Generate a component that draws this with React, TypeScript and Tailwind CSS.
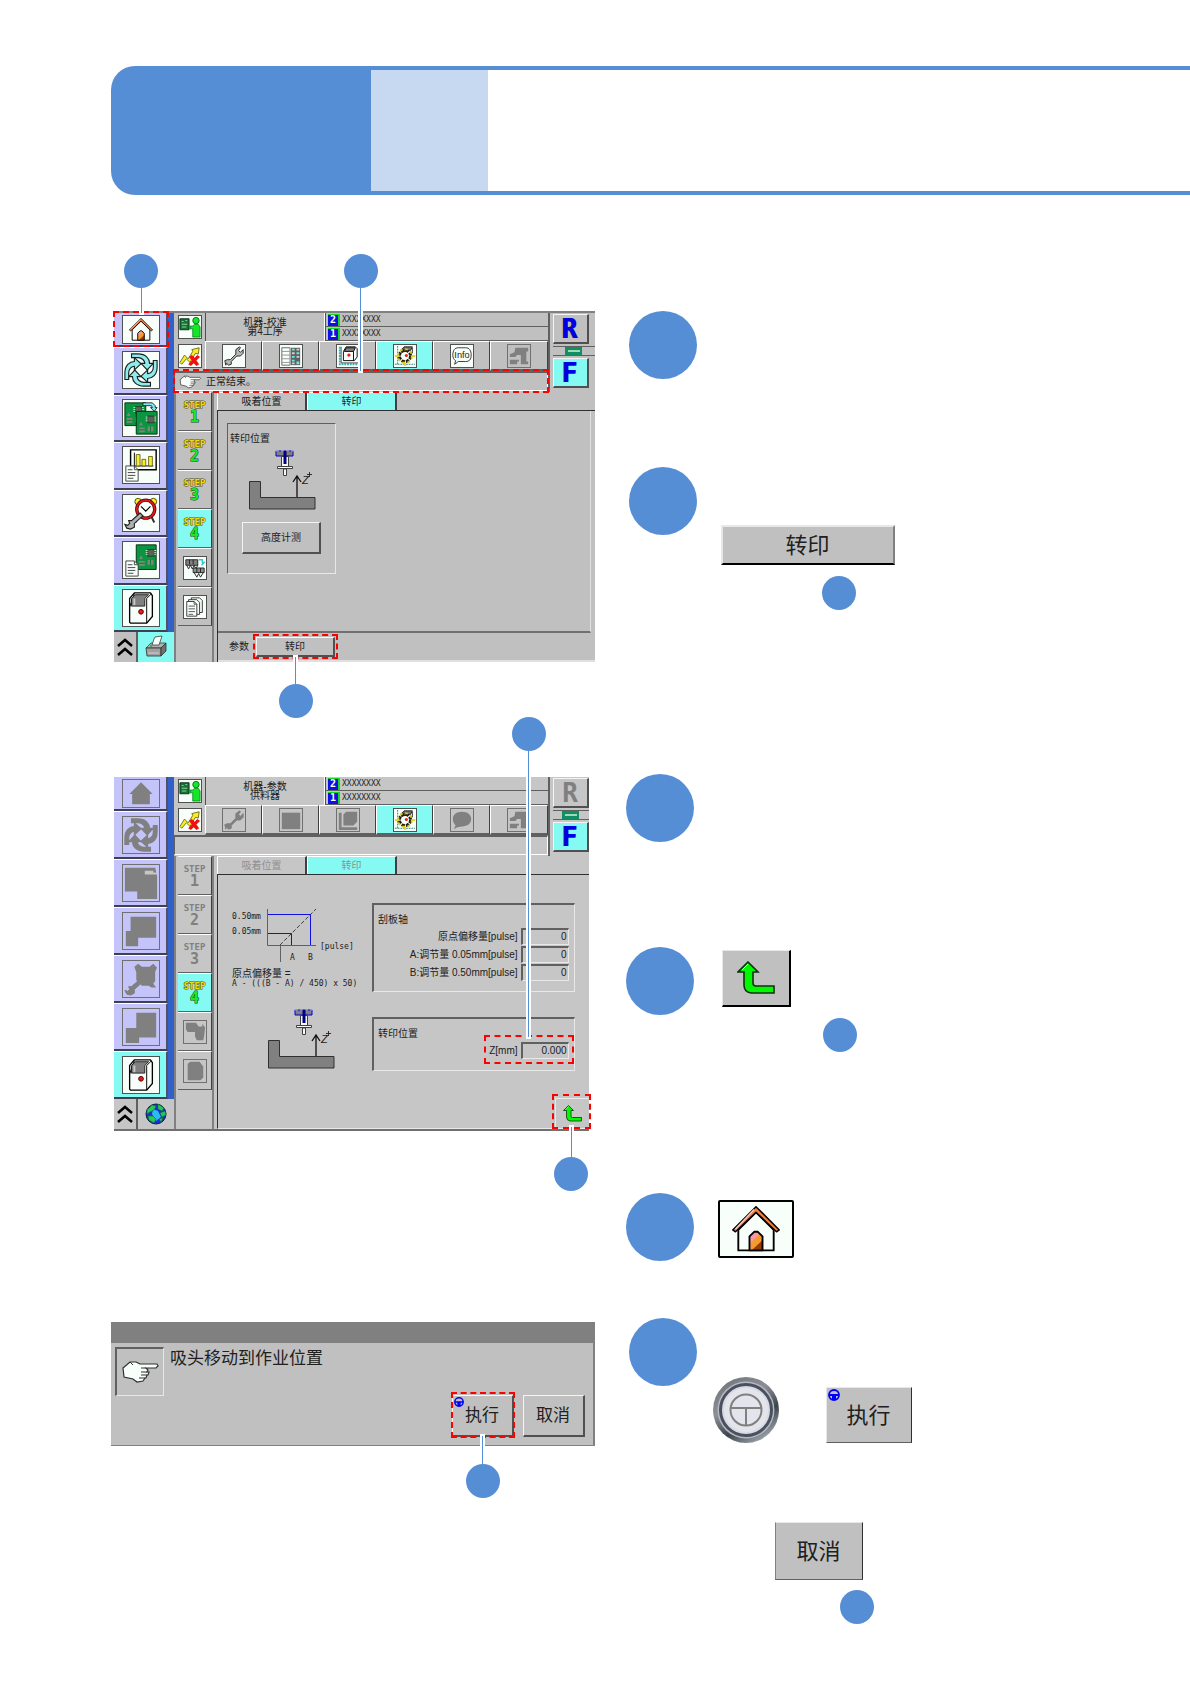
import React from 'react';
import clsx from 'clsx';

interface IconProps {
  off?: boolean;
}

interface CalloutProps {
  className: string;
  line: string;
  below?: boolean;
}

const Dot: React.FC<{ className?: string }> = ({ className }) => (
  <span className={clsx('block size-[34px] shrink-0 rounded-full bg-[#558ed5]', className)} />
);

// dashed frame around its parent, with a leader line to a dot
const Callout: React.FC<CalloutProps> = ({ className, line, below }) => (
  <span className={clsx('pointer-events-none absolute z-20 border-2 border-dashed border-[#ff0000]', className)}>
    <span
      className={clsx(
        'absolute left-1/2 flex -translate-x-1/2 items-center',
        below ? 'top-full flex-col-reverse' : 'bottom-full flex-col'
      )}
    >
      <Dot className="z-10" />
      <span className={clsx('block w-px bg-[#558ed5] ring-2 ring-white', line)} />
    </span>
  </span>
);

/* ---------- icons ---------- */

const HomeIcon: React.FC<IconProps> = ({ off }) => (
  <svg viewBox="0 0 76 58" className="size-full">
    {off ? (
      <path d="M38 5 63 30H57V52H19V30H13Z" fill="#808080" />
    ) : (
      <g strokeLinejoin="round">
        <path d="M19 30V52H57V30L38 11Z" fill="#f8fffa" stroke="#000" strokeWidth="2" />
        <path d="M38 5 63 30 60 32 38 11 16 32 13 30Z" fill="#f0803c" stroke="#000" strokeWidth="1.6" />
        <path d="M36 8 16 29" stroke="#ffc8c8" strokeWidth="1.5" />
        <path d="M31 52V37L36 32H40L45 37V52Z" fill="#f59a30" />
        <path d="M31 45V37L36 32H40L42 34Z" fill="#fa9a9a" />
        <path d="M33 52 45 41V52Z" fill="#963c00" />
        <path d="M31 52V37L36 32H40L45 37V52Z" fill="none" stroke="#000" strokeWidth="2" />
      </g>
    )}
  </svg>
);

const CycleIcon: React.FC<IconProps> = ({ off }) => (
  <svg viewBox="0 0 38 38" className="size-full">
    {[0, 90, 180, 270].map((a) => (
      <path
        key={a}
        transform={`rotate(${a} 19 19)`}
        d="M9 2H16C24 2 28 7 28 12H32L25.500 19 19 12H23C23 9 20 6 16 6H9Z"
        fill={off ? '#808080' : '#90ecec'}
        stroke={off ? '#808080' : '#182020'}
        strokeWidth="1.200"
      />
    ))}
  </svg>
);

const Chip: React.FC = () => (
  <g>
    <path d="M12 4H19V11H12Z" fill="#586458" stroke="#203020" strokeWidth=".8" />
    <path d="M10 5H12M10 7H12M10 9H12M19 5H21M19 7H21M19 9H21" stroke="#c8e8c8" />
    <path d="M3 14 5 10 7 14ZM3 16H9V21H3ZM12 15H18V20H12Z" fill="#7a8a7a" />
    <path d="M3 18.500H9M15 15V20" stroke="#107a30" />
  </g>
);

const BoardsIcon: React.FC<IconProps> = ({ off }) =>
  off ? (
    <svg viewBox="0 0 38 38" className="size-full">
      <path d="M2 3H34L36 12V36H15V28H2Z" fill="#808080" />
      <path d="M23 6H32V8H36V10H23Z" fill="#c6c6c6" />
    </svg>
  ) : (
    <svg viewBox="0 0 38 38" className="size-full">
      <path d="M2 3H24V27H2Z" fill="#0a9640" stroke="#003010" />
      <g transform="translate(1 3)"><Chip /></g>
      <path d="M14 12H36V36H14Z" fill="#0a9640" stroke="#003010" />
      <g transform="translate(14 13)"><Chip /></g>
      <path d="M21 3H31L34 6V8H36L33 12 29 8H31L30 6H21Z" fill="#80e8f0" stroke="#000" strokeWidth=".8" />
    </svg>
  );

const Sheet: React.FC = () => (
  <g>
    <path d="M3 20H12L16 24V36H3Z" fill="#f8fffa" stroke="#404040" />
    <path d="M12 20V24H16M5 24H10M5 27H13M5 30H13M5 33H11" fill="none" stroke="#404040" />
  </g>
);

const ReportIcon: React.FC<IconProps> = ({ off }) =>
  off ? (
    <svg viewBox="0 0 38 38" className="size-full">
      <path d="M8 4H35V26H16V35H3V19H8Z" fill="#808080" />
    </svg>
  ) : (
    <svg viewBox="0 0 38 38" className="size-full">
      <path d="M8 3H35V24H8Z" fill="#f8fffa" stroke="#000" strokeWidth="1.500" />
      <path d="M12 6V20H32" fill="none" stroke="#000" />
      <path d="M14 8H18V20H14ZM20 13H24V20H20ZM27 10H31V20H27Z" fill="#f8ee30" stroke="#504800" strokeWidth=".8" />
      <Sheet />
    </svg>
  );

const ClockIcon: React.FC<IconProps> = ({ off }) => {
  const wrench = 'M4 35 2 31 5 32 7 30 6 27 9 27 18 19 21 22 12 30 12 34 8 36Z';
  return off ? (
    <svg viewBox="0 0 38 38" className="size-full">
      <path d="M12 6 16 3 20 6H28L32 3 36 7 34 11V21L32 24 35 28H30L27 26H20L14 20V12Z" fill="#808080" />
      <path d={wrench} fill="#808080" stroke="#808080" />
    </svg>
  ) : (
    <svg viewBox="0 0 38 38" className="size-full">
      <path d="M16 24 13 29M30 23 33 29" stroke="#303030" strokeWidth="2" />
      <circle cx="16" cy="7" r="3.500" fill="#f8ee30" stroke="#504800" />
      <circle cx="32" cy="7" r="3.500" fill="#f8ee30" stroke="#504800" />
      <circle cx="24" cy="15" r="9.500" fill="#f8fffa" stroke="#500000" strokeWidth="3.500" />
      <circle cx="24" cy="15" r="9.500" fill="none" stroke="#e01818" strokeWidth="2" />
      <path d="M19 12 24 17 29 12" fill="none" stroke="#000" strokeWidth="1.200" />
      <path d={wrench} fill="#b0b0b0" stroke="#202020" strokeWidth="1.200" />
    </svg>
  );
};

const BoardDocIcon: React.FC<IconProps> = ({ off }) =>
  off ? (
    <svg viewBox="0 0 38 38" className="size-full">
      <path d="M14 4H35V30H17V36H3V20H14Z" fill="#808080" />
    </svg>
  ) : (
    <svg viewBox="0 0 38 38" className="size-full">
      <path d="M14 3H35V29H14Z" fill="#0a9640" stroke="#003010" />
      <g transform="translate(14 4)"><Chip /></g>
      <Sheet />
    </svg>
  );

const MachineIcon: React.FC<IconProps> = () => (
  <svg viewBox="0 0 38 38" className="size-full">
    <path d="M7 34V9L12 3H29L31 6V28L25 35H8Z" fill="#f8fffa" stroke="#000" strokeWidth="1.400" />
    <path d="M25 35V9L30 4M7 18 12 4" fill="none" stroke="#000" />
    <path d="M9 17V9L13 5H27L23 9V17Z" fill="#808080" stroke="#202020" />
    <path d="M12 9V16" stroke="#c8c8c8" strokeWidth="2" />
    <circle cx="19" cy="23" r="2.500" fill="#e81c1c" stroke="#500000" />
  </svg>
);

const OperatorIcon: React.FC<IconProps> = () => (
  <svg viewBox="0 0 24 24" className="size-full">
    <path d="M1 3H11V15H1Z" fill="#187038" stroke="#083010" />
    <path d="M3 6H5M7 5H9M3 9H9M3 12H8" stroke="#90e0a0" />
    <circle cx="18.500" cy="5" r="3.500" fill="#10e828" stroke="#087010" />
    <path d="M12 11H15L17 9H21L23 12V23H15V14H12Z" fill="#10e828" stroke="#087010" strokeWidth=".8" />
  </svg>
);

const AxisIcon: React.FC<IconProps> = () => (
  <svg viewBox="0 0 24 24" className="size-full">
    <path d="M1 19 6 11 10 15 15 7 14 5 22 3 21 10 18 9 12 19 8 15 3 21Z" fill="#f8ee20" stroke="#504800" strokeWidth=".8" />
    <path d="M11 13 14 11 17 14 20 11 23 13 19 17 22 21 19 23 16 20 13 23 10 21 14 17Z" fill="#f01010" />
  </svg>
);

const WrenchIcon: React.FC<IconProps> = ({ off }) => (
  <svg viewBox="0 0 24 24" className="size-full">
    <path
      d="M3 22 2 17 5 16 8 16 14 10 14 5 18 2 19 3 17 6 19 8 22 5 22 9 19 12 15 12 9 18 9 21 6 22 4 20Z"
      fill={off ? '#808080' : '#b8b8b8'}
      stroke={off ? '#808080' : '#202020'}
    />
  </svg>
);

const TableIcon: React.FC<IconProps> = ({ off }) =>
  off ? (
    <svg viewBox="0 0 24 24" className="size-full"><path d="M2 4H22V22H2Z" fill="#808080" /></svg>
  ) : (
    <svg viewBox="0 0 24 24" className="size-full">
      <path d="M2 3H11V22H2Z" fill="#f8fffa" stroke="#606060" />
      <path d="M2 7H11M2 11H11M2 15H11M2 19H11" stroke="#909090" />
      <path d="M12 3H22V22H12Z" fill="#606060" />
      <path d="M13 4H16V6H13ZM18 8H21V10H18ZM13 12H16V14H13ZM13 16H16V18H13ZM18 18H21V21H18Z" fill="#70e8e8" />
      <path d="M18 4H21V6H18ZM13 8H16V10H13ZM18 12H21V14H18ZM13 19H16V21H13Z" fill="#d0d0d0" />
    </svg>
  );

const PartIcon: React.FC<IconProps> = ({ off }) =>
  off ? (
    <svg viewBox="0 0 24 24" className="size-full">
      <path d="M2 4H5V20H22V23H2ZM7 6 10 3H22V14L18 18H7Z" fill="#808080" />
    </svg>
  ) : (
    <svg viewBox="0 0 24 24" className="size-full">
      <path d="M3 2V21H23" fill="none" stroke="#30b0b0" strokeWidth="2" strokeDasharray="2 1" />
      <path d="M4.500 2V19.500H23" fill="none" stroke="#202020" strokeWidth=".8" />
      <path d="M7 7 10 2H20L22 4V13L19 17H7Z" fill="#f8fffa" stroke="#000" />
      <path d="M8 7 10 3H20L18 7Z" fill="#808080" stroke="#000" />
      <path d="M18 7V17" stroke="#000" />
      <circle cx="13" cy="11" r="1.800" fill="#e81c1c" />
    </svg>
  );

const GearIcon: React.FC<IconProps> = () => (
  <svg viewBox="0 0 24 24" className="size-full">
    <path d="M4 1V22M1 21H23" stroke="#208080" strokeDasharray="2 1" />
    <path d="M8 5 11 2H20L18 6 8 8Z" fill="#707070" stroke="#202020" />
    <circle cx="12" cy="12" r="6" fill="none" stroke="#202010" strokeWidth="3.500" strokeDasharray="3.500 1.200" />
    <circle cx="12" cy="12" r="7.500" fill="none" stroke="#d8c820" strokeWidth="2" strokeDasharray="3 2.890" />
    <circle cx="12" cy="12" r="4" fill="#f8fffa" />
    <path d="M1 12H5M19 12H23M12 19V23" stroke="#e8d820" strokeWidth="2" />
    <circle cx="13.500" cy="11.500" r="1.700" fill="#e81c1c" />
    <path d="M20 3V9" stroke="#202020" />
  </svg>
);

const InfoIcon: React.FC<IconProps> = ({ off }) =>
  off ? (
    <svg viewBox="0 0 24 24" className="size-full">
      <path d="M12 3C18 3 22 6 22 11S18 19 12 19L7 20 3 22 5 18C3 16 2 14 2 11 2 6 6 3 12 3Z" fill="#808080" />
    </svg>
  ) : (
    <svg viewBox="0 0 24 24" className="size-full">
      <path d="M8 3H16C20 3 22 6 22 11S20 18 16 18H8L4 21 5 17C3 16 2 14 2 11 2 6 4 3 8 3Z" fill="#f8fffa" stroke="#303030" />
      <text x="12" y="14" textAnchor="middle" fontSize="10" fontFamily="Liberation Sans" fill="#202020">Info</text>
    </svg>
  );

const HeadIcon: React.FC<IconProps> = () => (
  <svg viewBox="0 0 24 24" className="size-full">
    <path d="M8 3H22V7H20V18H22V21H14V11H10L8 13H2V10L7 8Z" fill="#808080" />
    <path d="M2 16H12V18H10V21H2Z" fill="#808080" />
  </svg>
);

const FeederIcon: React.FC<IconProps> = ({ off }) =>
  off ? (
    <svg viewBox="0 0 24 24" className="size-full">
      <path d="M2 2H13L16 6H20V3L23 7 22 16 21 21H14L12 17V12H4L2 9Z" fill="#808080" />
    </svg>
  ) : (
    <svg viewBox="0 0 24 24" className="size-full">
      <path d="M2 3H15V9H2Z" fill="#808080" stroke="#202020" />
      <path d="M3 9 5 13 7 9 9 13 11 9 13 13 15 9M6 3V8M10 3V8" fill="none" stroke="#202020" />
      <path d="M16 3H20V6H22L19 9" fill="none" stroke="#30c8c8" strokeWidth="1.500" />
      <path d="M10 12H22V17H10Z" fill="#909090" stroke="#202020" />
      <path d="M11 17 14 22 16 18 18 22 21 17M14 12V17M18 12V17" fill="none" stroke="#202020" />
    </svg>
  );

const DocsIcon: React.FC<IconProps> = ({ off }) =>
  off ? (
    <svg viewBox="0 0 24 24" className="size-full"><path d="M4 4 7 2H17L21 7V19L18 22H4Z" fill="#808080" /></svg>
  ) : (
    <svg viewBox="0 0 24 24" className="size-full">
      <path d="M8 2H17L20 5V18H8Z" fill="#f8fffa" stroke="#303030" />
      <path d="M5 4H14L17 7V20H5Z" fill="#f8fffa" stroke="#303030" />
      <path d="M3 6H11L14 9V22H3Z" fill="#f8fffa" stroke="#303030" />
      <path d="M11 6V9H14M5 11H12M5 14H12M5 17H12M5 20H10" fill="none" stroke="#505050" />
    </svg>
  );

const ChevronsIcon = () => (
  <svg viewBox="0 0 16 20" className="h-5 w-4">
    <path d="M1 9 8 3 15 9M1 18 8 12 15 18" fill="none" stroke="#000" strokeWidth="2.500" />
  </svg>
);

const PrinterIcon = () => (
  <svg viewBox="0 0 24 24" className="size-6">
    <path d="M2 13 7 8H22L17 13Z" fill="#b0b0b0" stroke="#404040" strokeWidth=".8" />
    <path d="M8 10 10 4 11 2 18 1 17 4 15 10Z" fill="#f8fffa" stroke="#404040" strokeWidth=".8" />
    <path d="M2 13H17V21H3Z" fill="#a0a0a0" stroke="#303030" strokeWidth=".8" />
    <path d="M17 13 22 8V16L17 21Z" fill="#707070" stroke="#303030" strokeWidth=".8" />
    <path d="M4 18H15" stroke="#d0d0d0" />
    <circle cx="7" cy="11" r="1" fill="#18b030" />
  </svg>
);

const GlobeIcon = () => (
  <svg viewBox="0 0 24 24" className="size-6">
    <circle cx="12" cy="12" r="10" fill="#1830d8" stroke="#102040" />
    <path d="M9 7 14 9 17 15 12 19 8 12Z" fill="#30b8f0" />
    <path d="M3 8 8 3 12 4 10 8 6 10 3 12ZM14 2 20 6 18 9 14 7ZM16 11 21 9 22 13 18 15ZM4 14 9 14 12 17 10 21 5 18ZM15 17 19 16 17 20Z" fill="#28c858" stroke="#107030" strokeWidth=".6" />
  </svg>
);

const HandIcon: React.FC<{ className: string }> = ({ className }) => (
  <svg viewBox="0 0 38 24" className={className}>
    <path
      d="M2 8 9 2H15L19 4H36L37 6 35 8H25L27 10 26 12H28L27 15H26L25 18H24L22 21 16 22 12 19 3 17Z"
      fill="#f8fffa"
      stroke="#303030"
      strokeWidth="1.200"
    />
    <path d="M25 8H20M26 12H20M26 15H20M24 18H18M9 2 12 5" stroke="#303030" />
  </svg>
);

const NozzleDrawing: React.FC<{ className?: string }> = ({ className }) => (
  <svg viewBox="0 0 68 60" className={clsx('h-[60px] w-[68px]', className)}>
    <path d="M27 1H44V6H27Z" fill="#808080" stroke="#0000c8" />
    <path d="M27 1H44" stroke="#c6c6c6" strokeDasharray="3 2" />
    <path d="M32.500 6.500H39.500V17H32.500Z" fill="#f8f8f8" stroke="#404040" />
    <path d="M36 1V14" stroke="#000080" strokeWidth="3" />
    <path d="M28.500 16.500H43.500V18.500H28.500Z" fill="#f8f8f8" stroke="#404040" />
    <path d="M34.500 19H37.500V25.500H34.500Z" fill="#f8f8f8" stroke="#404040" />
    <path d="M.500 31.500H11.500V47.500H66V59H.500Z" fill="#808080" stroke="#303030" />
    <path d="M48 47V26M44 32 48 26 52 32" fill="none" stroke="#101010" strokeWidth="1.300" />
    <text x="53" y="34" fontSize="11" fontStyle="italic" fontFamily="Liberation Sans" fill="#202020">Z</text>
    <path d="M58 24.500H63M60.500 22V27" stroke="#202020" strokeWidth=".9" />
  </svg>
);

const ReturnIcon: React.FC<{ className: string }> = ({ className }) => (
  <svg viewBox="0 0 38 34" className={className}>
    <path
      d="M11 1 21 11H16V22Q16 25 19 25H37V32H14Q7 31 7 24V11H1Z"
      fill="#00f800"
      stroke="#103010"
      strokeWidth="1.600"
    />
    <path d="M11 3 5 9" stroke="#d0ffd0" />
  </svg>
);

const WheelIcon: React.FC<{ className: string }> = ({ className }) => (
  <svg viewBox="0 0 12 12" className={className}>
    <circle cx="6" cy="6" r="5" fill="#c0c0c0" stroke="#0000f8" strokeWidth="1.800" />
    <path d="M1 5H11V7H8V11H4V7H1Z" fill="#0000f8" />
  </svg>
);

const KnobIcon = () => (
  <svg viewBox="0 0 66 66" className="size-[66px]" role="img" aria-label="执行按钮">
    <defs>
      <linearGradient id="rim" x1="0" y1="0" x2=".6" y2="1">
        <stop offset="0" stopColor="#6c7076" />
        <stop offset=".45" stopColor="#8c9096" />
        <stop offset=".75" stopColor="#3c444c" />
        <stop offset="1" stopColor="#9098a0" />
      </linearGradient>
    </defs>
    <circle cx="33" cy="33" r="33" fill="url(#rim)" />
    <circle cx="33" cy="33" r="28.500" fill="#b4b8c0" />
    <circle cx="33" cy="33" r="25.500" fill="#d8dae2" stroke="#4a5060" strokeWidth="3" />
    <circle cx="33" cy="33" r="22" fill="#e4e4ec" />
    <circle cx="33" cy="33" r="15.500" fill="none" stroke="#808080" strokeWidth="2" />
    <path d="M17 31H49M33 31V48" stroke="#808080" strokeWidth="2" />
  </svg>
);

/* ---------- machine screen ---------- */

const NAV = [
  { label: '主页', Icon: HomeIcon },
  { label: '生产', Icon: CycleIcon },
  { label: '基板', Icon: BoardsIcon },
  { label: '统计', Icon: ReportIcon },
  { label: '维护', Icon: ClockIcon },
  { label: '数据', Icon: BoardDocIcon },
  { label: '机器', Icon: MachineIcon },
];

const TOOLS = [
  { label: '设定', Icon: WrenchIcon },
  { label: '一览', Icon: TableIcon },
  { label: '元件', Icon: PartIcon },
  { label: '校准', Icon: GearIcon },
  { label: '信息', Icon: InfoIcon },
  { label: '头部', Icon: HeadIcon },
];

const IconFrame: React.FC<{ off?: boolean; className: string; children: React.ReactNode }> = ({ off, className, children }) => (
  <span
    className={clsx('block shrink-0 border', off ? 'border-[#707070]' : 'border-[#505050] bg-[#f8fffa]', className)}
  >
    {children}
  </span>
);

const raised = 'border-t border-l border-b-2 border-r-2 border-t-[#f4f4f4] border-l-[#f4f4f4] border-b-[#505050] border-r-[#505050]';
const sunken = 'border-t-2 border-l-2 border-b border-r border-t-[#606060] border-l-[#606060] border-b-[#e8e8e8] border-r-[#e8e8e8]';

interface ScreenProps {
  title: [string, string];
  locked?: boolean;
  message?: React.ReactNode;
  homeMark?: React.ReactNode;
  systemIcon: React.ReactNode;
  className: string;
  sideClass: string;
  children: React.ReactNode;
}

const Screen: React.FC<ScreenProps> = ({ title, locked, message, homeMark, systemIcon, className, sideClass, children }) => (
  <section className={clsx('flex text-[10px] text-[#202020]', className)}>
    {/* left navigation */}
    <nav className="flex w-[60px] shrink-0 flex-col">
      <div className="flex flex-1 flex-col border-r-[6px] border-[#3060c8]">
        {NAV.map(({ label, Icon }, i) => {
          const off = locked && i < 6;
          return (
            <button
              key={label}
              aria-label={label}
              disabled={off}
              className={clsx(
                'relative flex items-center justify-center border-r-2 border-b-2 border-r-[#505068] border-b-[#404050] pl-[2px]',
                i === 0 ? 'h-[34px]' : 'flex-1 border-t border-t-white',
                i === 6 ? 'bg-[#84faf2]' : 'bg-[#c4c4fa]'
              )}
            >
              <IconFrame off={off} className={i === 0 ? 'h-[29px] w-[38px]' : 'size-[38px]'}>
                <Icon off={off} />
              </IconFrame>
              {i === 0 && homeMark}
            </button>
          );
        })}
      </div>
      <div className="flex h-[30px]">
        <button aria-label="上移" className="flex w-6 items-center justify-center border-r-2 border-[#606060]">
          <ChevronsIcon />
        </button>
        {systemIcon}
      </div>
    </nav>

    <div className="flex min-w-0 flex-1 flex-col">
      <div className="flex h-[79px]">
        <div className="flex min-w-0 flex-1 flex-col">
          <div className="flex h-7">
            <div className="flex w-8 items-center justify-center border-r border-[#505050]">
              <IconFrame className="size-6"><OperatorIcon /></IconFrame>
            </div>
            <h2 className="flex w-[119px] flex-col items-center justify-center border-r border-white text-[10px] leading-[9px] font-normal">
              <span>{title[0]}</span>
              <span>{title[1]}</span>
            </h2>
            <div className="flex flex-1 flex-col border-l border-[#505050]">
              {['2', '1'].map((n) => (
                <div key={n} className="flex flex-1 items-center gap-[2px] border-b border-[#606060] pl-[2px]">
                  <span className="flex h-3 w-3 items-center justify-center border-t border-r-2 border-[#10d828] bg-[#1010e0] font-['DejaVu_Sans_Mono'] text-[10px] leading-none font-bold text-white">
                    {n}
                  </span>
                  <span className="font-['DejaVu_Sans_Mono',monospace] text-[8px] leading-none">XXXXXXXX</span>
                </div>
              ))}
            </div>
          </div>
          <div className="flex h-[30px]">
            <button aria-label="轴" className="flex w-[31px] items-center justify-center">
              <IconFrame className="size-6"><AxisIcon /></IconFrame>
            </button>
            {TOOLS.map(({ label, Icon }, i) => {
              const off = i === 5 || (locked && i !== 3);
              return (
                <button
                  key={label}
                  aria-label={label}
                  disabled={off}
                  className={clsx(
                    'flex flex-1 items-center justify-center border-t border-r border-b-2 border-l border-t-white border-r-[#404040] border-b-[#606060] border-l-white',
                    i === 3 && 'bg-[#84faf2]'
                  )}
                >
                  <IconFrame off={off} className="size-6"><Icon off={off} /></IconFrame>
                </button>
              );
            })}
          </div>
          <div className="relative flex h-5 items-center gap-[5px] border-t-2 border-r border-b border-l border-t-[#606060] border-r-white border-b-white border-l-[#606060] pl-1">
            {message}
          </div>
        </div>
        {/* rear / front selector */}
        <div className={clsx('flex shrink-0 flex-col items-start border-l-2 border-[#606060] pt-px pl-[3px]', sideClass)}>
          <button
            disabled={locked}
            className={clsx(
              'flex h-[30px] w-9 items-center justify-center font-["DejaVu_Sans_Mono"] text-[26px] leading-none font-bold',
              raised,
              locked ? 'text-[#808080]' : 'text-[#0000e8] [text-shadow:-1px_0_#101040]'
            )}
          >
            R
          </button>
          <span className="my-[2px] flex h-[10px] w-full justify-center border-y border-[#606060]">
            <span className="flex w-[17px] items-center justify-center bg-[#109060]">
              <span className="h-[2px] w-3 bg-[#a0d8b8]" />
            </span>
          </span>
          <button
            className={clsx(
              'flex h-[30px] w-9 items-center justify-center bg-[#84faf2] font-["DejaVu_Sans_Mono"] text-[26px] leading-none font-bold text-[#0000e8] [text-shadow:-1px_0_#101040]',
              raised
            )}
          >
            F
          </button>
        </div>
      </div>

      <div className="flex flex-1">
        {/* step list */}
        <div className="mr-[3px] flex w-10 shrink-0 flex-col border-r-2 border-l-2 border-[#808080] pl-[2px]">
          {[1, 2, 3, 4].map((n) => {
            const off = locked && n < 4;
            return (
              <button
                key={n}
                disabled={off}
                className={clsx(
                  'flex h-[39px] w-full flex-col items-center justify-center border-t border-r border-b border-t-white border-r-[#404040] border-b-[#606060] font-["DejaVu_Sans_Mono"] font-bold',
                  n === 4 && 'bg-[#84faf2]'
                )}
              >
                <span
                  className={clsx(
                    'text-[9px] leading-[11px]',
                    off ? 'text-[#808080]' : 'text-[#f0e000] [paint-order:stroke] [-webkit-text-stroke:1px_#504c10]'
                  )}
                >
                  STEP
                </span>
                <span
                  className={clsx(
                    'text-[15px] leading-[13px]',
                    off ? 'text-[#808080]' : 'text-[#18e828] [paint-order:stroke] [-webkit-text-stroke:1px_#104818]'
                  )}
                >
                  {n}
                </span>
              </button>
            );
          })}
          {[FeederIcon, DocsIcon].map((Icon, i) => (
            <button
              key={i}
              aria-label={i === 0 ? '供料器' : '文件'}
              disabled={locked}
              className="flex h-[39px] w-full items-center justify-center border-t border-r border-b border-t-white border-r-[#404040] border-b-[#606060]"
            >
              <IconFrame off={locked} className="size-6"><Icon off={locked} /></IconFrame>
            </button>
          ))}
        </div>
        <div className="flex min-w-0 flex-1 flex-col">
          <div role="tablist" className="flex h-[18px]">
            {['吸着位置', '转印'].map((t, i) => (
              <button
                key={t}
                role="tab"
                aria-selected={i === 1}
                disabled={locked}
                className={clsx(
                  'w-[90px] border-t border-r-2 border-l border-t-white border-r-[#404040] border-l-white leading-none',
                  i === 1 && 'bg-[#84faf2]',
                  locked && 'text-[#909090]'
                )}
              >
                {t}
              </button>
            ))}
          </div>
          {children}
        </div>
      </div>
    </div>
  </section>
);

interface FieldProps {
  id: string;
  label: string;
  value: string;
  mark?: React.ReactNode;
}

const Field: React.FC<FieldProps> = ({ id, label, value, mark }) => (
  <div className="relative flex h-[18px] items-center gap-[3px]">
    <label htmlFor={id}>{label}</label>
    <input
      id={id}
      defaultValue={value}
      className={clsx('h-[17px] w-12 pr-px text-right outline-none', sunken)}
    />
    {mark}
  </div>
);

const PARAMS = [
  { id: 'origin', label: '原点偏移量[pulse]', value: '0' },
  { id: 'adjust-a', label: 'A:调节量 0.05mm[pulse]', value: '0' },
  { id: 'adjust-b', label: 'B:调节量 0.50mm[pulse]', value: '0' },
];

const OffsetChart = () => (
  <svg viewBox="0 0 126 58" className="h-[58px] w-[126px] font-['DejaVu_Sans_Mono',monospace] text-[8px]" fill="#202020">
    <text x="0" y="12">0.50mm</text>
    <text x="0" y="27">0.05mm</text>
    <text x="88" y="42">[pulse]</text>
    <text x="58" y="53">A</text>
    <text x="76" y="53">B</text>
    <path d="M35.500 2V38.500H84M48.500 38V55" fill="none" stroke="#606060" />
    <path d="M48 38 84 2" stroke="#404040" strokeDasharray="4 2" />
    <path d="M36 7.500H78.500V38" fill="none" stroke="#1010e0" />
    <path d="M36 26.500H59.500V38" fill="none" stroke="#1010e0" />
  </svg>
);

/* ---------- page ---------- */

const Step: React.FC<{ className?: string; children?: React.ReactNode }> = ({ className, children }) => (
  <li className={clsx('flex', className)}>
    <span className="block size-[68px] shrink-0 rounded-full bg-[#558ed5]" />
    {children && <div className="min-w-0 flex-1">{children}</div>}
  </li>
);

const App: React.FC = () => (
  <div className="min-h-screen bg-white pt-[66px] pb-[60px] pl-[111px] font-['Liberation_Sans','Noto_Sans_CJK_SC',sans-serif]">
    <header className="flex h-[129px] overflow-hidden rounded-l-3xl">
      <div className="w-[260px] shrink-0 bg-[#558ed5]" />
      <div className="w-[117px] shrink-0 border-y-4 border-[#558ed5] bg-[#c6d9f1]" />
      <div className="flex-1 border-y-4 border-[#558ed5]" />
    </header>

    <main className="mt-[116px] grid grid-cols-[minmax(0,9fr)_minmax(0,11fr)]">
      <div>
        <Screen
          title={['机器-校准', '第4工序']}
          className="mr-[2px] ml-[3px] min-h-[351px] border-t-2 border-[#808080] bg-[#c0c0c0]"
          sideClass="w-[47px]"
          homeMark={<Callout className="-top-[2px] -right-[3px] -bottom-[2px] -left-px" line="h-[25px]" />}
          systemIcon={
            <button aria-label="打印" className="flex flex-1 items-center justify-center bg-[#84faf2]">
              <PrinterIcon />
            </button>
          }
          message={
            <>
              <HandIcon className="h-[14px] w-[22px]" />
              <span className="leading-none">正常结束。</span>
              <Callout className="-top-[4px] -right-[2px] -bottom-[3px] -left-[2px]" line="h-[83px]" />
            </>
          }
        >
          <div className="flex flex-1 flex-col border-t border-l border-[#303030]">
            <div className="mr-1 flex-1 border-r border-b-2 border-r-[#e0e0e0] border-b-[#707070] pt-3 pl-[9px]">
              <div className="w-[109px] border border-t-[#606060] border-r-[#e8e8e8] border-b-[#e8e8e8] border-l-[#606060] pt-[9px] pb-[19px]">
                <p className="pl-[2px] leading-3">转印位置</p>
                <NozzleDrawing className="mt-[5px] ml-[21px]" />
                <button className={clsx('mt-3 ml-[14px] h-8 w-[79px]', raised)}>高度计测</button>
              </div>
            </div>
            <div className="flex h-[29px] items-center border-b-2 border-[#e0e0e0] pl-[11px]">
              <span>参数</span>
              <span className="relative ml-[7px]">
                <button className={clsx('block h-5 w-[79px]', raised)}>转印</button>
                <Callout below className="-top-[3px] -right-[3px] -bottom-[2px] -left-[3px]" line="h-[27px]" />
              </span>
            </div>
          </div>
        </Screen>

        <Screen
          locked
          title={['机器-参数', '供料器']}
          className="mt-[115px] mr-2 ml-[3px] min-h-[354px] border-b-2 border-[#707070] bg-[#c6c6c6]"
          sideClass="w-[41px]"
          systemIcon={
            <button aria-label="语言" className="flex flex-1 items-center justify-center">
              <GlobeIcon />
            </button>
          }
        >
          <div className="flex flex-1 flex-col border-t border-b border-l border-t-[#303030] border-b-[#e8e8e8] border-l-[#303030]">
            <div className="flex pr-[14px]">
              <div className="w-[154px] shrink-0 pt-8 pl-[14px]">
                <OffsetChart />
                <p className="mt-1 leading-[9px] whitespace-nowrap">
                  原点偏移量 =
                  <br />
                  <span className="font-['DejaVu_Sans_Mono',monospace] text-[8px]">A - (((B - A) / 450) x 50)</span>
                </p>
                <NozzleDrawing className="mt-[21px] ml-9" />
              </div>
              <div className="min-w-0 flex-1 pt-7">
                <div className={clsx('flex h-[89px] flex-col items-end pt-[7px] pr-[5px]', sunken)}>
                  <p className="w-full pl-1 leading-[15px]">刮板轴</p>
                  {PARAMS.map((p) => (
                    <Field key={p.id} {...p} />
                  ))}
                </div>
                <div className={clsx('mt-[25px] flex h-[54px] flex-col items-end pt-[7px] pr-[5px]', sunken)}>
                  <p className="w-full pl-1 leading-[15px]">转印位置</p>
                  <Field
                    id="transfer-z"
                    label="Z[mm]"
                    value="0.000"
                    mark={<Callout className="-top-[6px] -right-[5px] -bottom-[5px] -left-[5px]" line="h-[286px]" />}
                  />
                </div>
              </div>
            </div>
            <div className="mt-auto flex justify-end">
              <span className="relative">
                <button
                  aria-label="返回"
                  className="flex h-[30px] w-[34px] items-center justify-center border-t border-l border-[#e8e8e8]"
                >
                  <ReturnIcon className="h-[17px] w-[19px]" />
                </button>
                <Callout below className="-top-1 -right-[2px] -bottom-[1px] -left-[3px]" line="h-[30px]" />
              </span>
            </div>
          </div>
        </Screen>

        <section
          role="dialog"
          aria-label="吸头移动到作业位置"
          className="mt-[191px] mr-[2px] min-h-[124px] border-r-2 border-b border-[#808080] bg-[#c0c0c0] text-[17px] text-[#202020]"
        >
          <div className="h-[21px] bg-[#808080]" />
          <div className="flex gap-[6px] pt-1 pl-1">
            <div className={clsx('flex size-[49px] items-center justify-center', sunken)}>
              <HandIcon className="h-6 w-[38px]" />
            </div>
            <p className="leading-6">吸头移动到作业位置</p>
          </div>
          <div className="-mt-px flex justify-end gap-[9px] pr-2 pb-2">
            <span className="relative">
              <button className={clsx('block h-[42px] w-[62px]', raised)}>执行</button>
              <WheelIcon className="absolute top-[2px] left-[2px] size-[10px]" />
              <Callout below className="-top-[3px] -right-px -bottom-px -left-px" line="h-7" />
            </span>
            <button className={clsx('h-[42px] w-[62px]', raised)}>取消</button>
          </div>
        </section>
      </div>

      <ol className="pl-[29px] text-[22px] text-[#202020]">
        <Step className="min-h-[156px] pl-[3px]" />
        <Step className="min-h-[307px] gap-6 pl-[3px]">
          <button className="mt-[58px] block h-10 w-[174px] border-2 border-t-[#e8e8e8] border-r-[#808080] border-b-black border-l-[#e8e8e8] bg-[#c0c0c0]">
            转印
          </button>
          <Dot className="mt-[11px] ml-[101px]" />
        </Step>
        <Step className="min-h-[173px]" />
        <Step className="min-h-[246px] gap-7">
          <button
            aria-label="返回"
            className="mt-[3px] flex h-[57px] w-[69px] items-center justify-center border-t border-r-2 border-b-2 border-l border-t-[#e8e8e8] border-r-black border-b-black border-l-[#e8e8e8] bg-[#c0c0c0]"
          >
            <ReturnIcon className="h-[34px] w-[38px]" />
          </button>
          <Dot className="mt-[11px] ml-[101px]" />
        </Step>
        <Step className="min-h-[125px] gap-6">
          <button aria-label="主页" className="mt-[7px] block h-[58px] w-[76px] rounded-xs border-2 border-black bg-[#f8fffa]">
            <HomeIcon />
          </button>
        </Step>
        <Step className="gap-4 pl-[3px]">
          <div className="mt-[59px] flex items-end gap-[47px]">
            <KnobIcon />
            <span className="relative">
              <button className="block h-14 w-[86px] border border-t-[#e8e8e8] border-r-[#303030] border-b-[#606060] border-l-[#e8e8e8] bg-[#c0c0c0]">
                执行
              </button>
              <WheelIcon className="absolute top-[2px] left-[2px] size-3" />
            </span>
          </div>
          <button className="mt-[79px] ml-[62px] block h-[58px] w-[88px] border border-t-[#e8e8e8] border-r-[#303030] border-b-[#606060] border-l-[#808080] bg-[#c0c0c0]">
            取消
          </button>
          <Dot className="mt-[10px] ml-[127px]" />
        </Step>
      </ol>
    </main>
  </div>
);

export default App;
